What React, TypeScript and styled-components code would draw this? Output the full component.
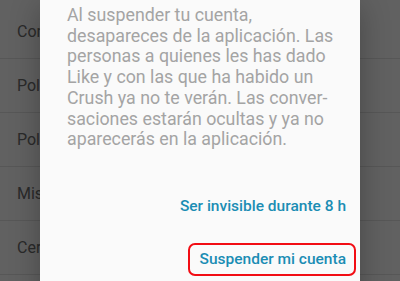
import React from 'react';
import styled, { createGlobalStyle } from 'styled-components';

const GlobalStyle = createGlobalStyle`
  html, body {
    margin: 0;
    padding: 0;
    background: #ffffff;
  }
  body {
    font-family: Roboto, "Noto Sans", "Liberation Sans", sans-serif;
  }
`

const Screen = styled.div`
  position: relative;
  width: 400px;
  height: 281px;
  overflow: hidden;
  background: #ffffff;
`

const SettingsList = styled.ul`
  list-style: none;
  margin: 0;
  padding: 5px 0 0;
`

const SettingsRow = styled.li`
  display: flex;
  align-items: center;
  height: 53px;
  padding-left: 17px;
  border-bottom: 1px solid #e4e4e4;
  font-size: 16px;
  color: #6e6e6e;
  white-space: nowrap;
`

const Scrim = styled.div`
  position: absolute;
  inset: 0;
  background: rgba(0, 0, 0, 0.62);
`

const Dialog = styled.div`
  position: absolute;
  left: 40px;
  top: 0;
  width: 320px;
  height: 300px;
  background: #fafafa;
  box-shadow: 0 6px 28px rgba(0, 0, 0, 0.28);
  display: flex;
  flex-direction: column;
`

const Message = styled.p`
  margin: 0;
  padding: 5px 24px 0 27px;
  font-size: 17.8px;
  line-height: 20.7px;
  color: #a4a4a4;
  hyphens: manual;
`

const Actions = styled.div`
  display: flex;
  flex-direction: column;
  align-items: flex-end;
  gap: 20px;
  margin-top: 40px;
  padding-right: 4px;
`

const ActionButton = styled.button<{ $highlighted?: boolean }>`
  display: flex;
  align-items: center;
  height: 33px;
  padding: 0 8px 0 10px;
  margin: 0;
  background: transparent;
  border: 2px solid ${p => (p.$highlighted ? '#f20d14' : 'transparent')};
  border-radius: 7px;
  font-family: Roboto, "Noto Sans", "Liberation Sans", sans-serif;
  font-size: 15.5px;
  font-weight: 500;
  color: #1b8db4;
  cursor: pointer;
`

const rows = [
  'Configuración de la cuenta',
  'Política de privacidad',
  'Política de cookies',
  'Mis datos',
  'Cerrar sesión',
]

export default function App() {
  return (
    <>
      <GlobalStyle />
      <Screen>
        <SettingsList>
          {rows.map(r => (
            <SettingsRow key={r}>{r}</SettingsRow>
          ))}
        </SettingsList>
        <Scrim />
        <Dialog>
          <Message>
            Al suspender tu cuenta, desapareces de la aplicación. Las personas a quienes les has dado
            Like y con las que ha habido un Crush ya no te verán. Las conver{'\u00AD'}saciones estarán
            ocultas y ya no aparecerás en la aplicación.
          </Message>
          <Actions>
            <ActionButton>Ser invisible durante 8 h</ActionButton>
            <ActionButton $highlighted>Suspender mi cuenta</ActionButton>
          </Actions>
        </Dialog>
      </Screen>
    </>
  )
}
